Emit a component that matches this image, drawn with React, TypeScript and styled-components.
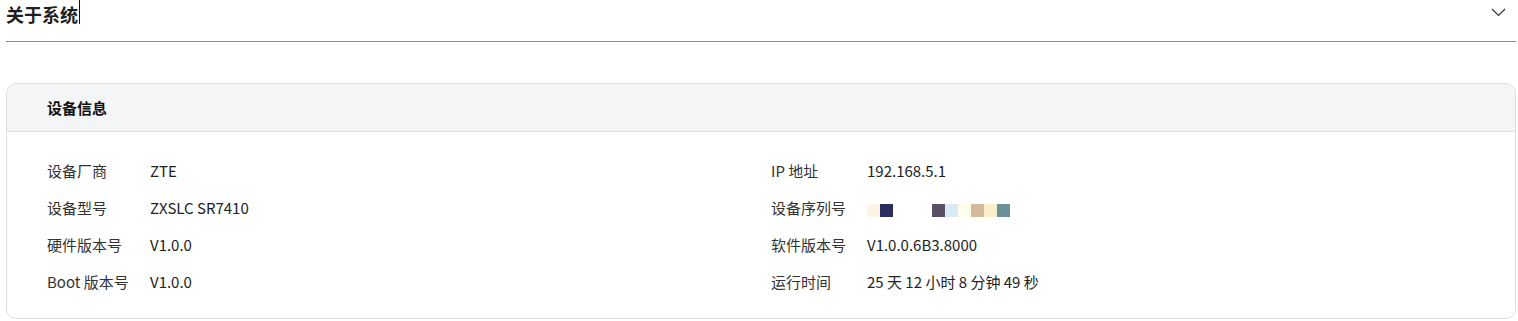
import * as React from 'react'
import styled, { createGlobalStyle } from 'styled-components'

const GlobalStyle = createGlobalStyle`
  body {
    margin: 0;
    background: #fff;
    font-family: "Noto Sans CJK SC", "Noto Sans", sans-serif;
    color: #222;
  }
`

const Page = styled.div`
  padding: 0 2px 0 6px;
`

const Section = styled.div`
  display: flex;
  align-items: flex-start;
  justify-content: space-between;
  height: 28px;
  padding-bottom: 13px;
  border-bottom: 1px solid #8c8c8c;
`

const SectionTitle = styled.h2`
  margin: 0;
  display: flex;
  align-items: center;
  font-size: 18px;
  line-height: 28px;
  font-weight: 700;
  color: #1f1f1f;
`

const Caret = styled.span`
  display: inline-block;
  width: 1px;
  height: 24px;
  margin-left: 1px;
  margin-top: -4px;
  background: #111;
`

const Toggle = styled.span`
  display: flex;
  margin: 8px 10px 0 0;
  color: #333;
`

const Card = styled.div`
  margin-top: 41px;
  border: 1px solid #dcdee2;
  border-radius: 10px;
  overflow: hidden;
`

const CardHead = styled.div`
  height: 47px;
  display: flex;
  align-items: center;
  padding-left: 40px;
  background: #f4f5f7;
  border-bottom: 1px solid #dcdee2;
  font-size: 15px;
  font-weight: 700;
  color: #111;
`

const Grid = styled.div`
  display: grid;
  grid-template-columns: 103px 621px 96px 1fr;
  grid-auto-rows: 37px;
  align-items: center;
  padding: 20px 40px 18px;
  font-size: 15px;
`

const Label = styled.div`
  color: #333;
`

const Value = styled.div`
  color: #222;
`

const Mosaic = styled.div`
  display: flex;
  height: 13px;
  margin-top: 5px;
`

const Tile = styled.span<{ $c: string }>`
  width: 13px;
  height: 13px;
  background: ${(p) => p.$c};
`

const serial = ['#fdf5e4', '#2b2d5e', '#fff', '#fff', '#fff', '#5a5064', '#d9eaf4', '#fefde9', '#d5b99c', '#f9efcb', '#6c9097']

const Chevron = () => (
  <svg width="15" height="9" viewBox="0 0 15 9" fill="none" stroke="currentColor" strokeWidth="1.2">
    <path d="M1 1l6.5 6.5L14 1" />
  </svg>
)

export default function App() {
  return (
    <Page>
      <GlobalStyle />
      <Section>
        <SectionTitle>
          关于系统<Caret />
        </SectionTitle>
        <Toggle>
          <Chevron />
        </Toggle>
      </Section>
      <Card>
        <CardHead>设备信息</CardHead>
        <Grid>
          <Label>设备厂商</Label>
          <Value>ZTE</Value>
          <Label>IP 地址</Label>
          <Value>192.168.5.1</Value>

          <Label>设备型号</Label>
          <Value>ZXSLC SR7410</Value>
          <Label>设备序列号</Label>
          <Mosaic>
            {serial.map((c, i) => (
              <Tile key={i} $c={c} />
            ))}
          </Mosaic>

          <Label>硬件版本号</Label>
          <Value>V1.0.0</Value>
          <Label>软件版本号</Label>
          <Value>V1.0.0.6B3.8000</Value>

          <Label>Boot 版本号</Label>
          <Value>V1.0.0</Value>
          <Label>运行时间</Label>
          <Value>25 天 12 小时 8 分钟 49 秒</Value>
        </Grid>
      </Card>
    </Page>
  )
}
